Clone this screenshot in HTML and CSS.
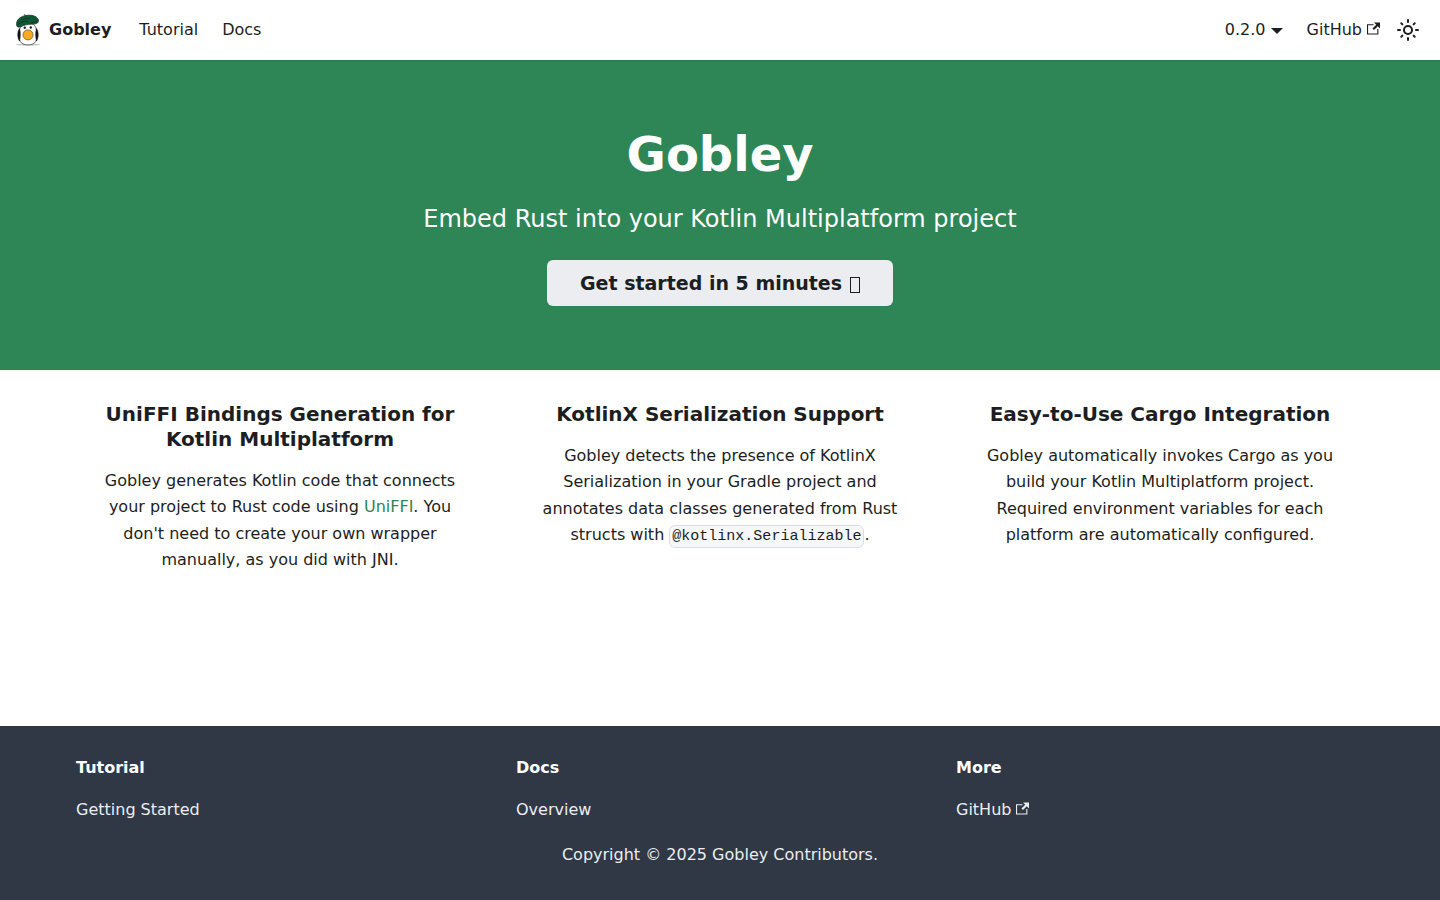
FILE: index.html
```html
<!DOCTYPE html>
<html lang="en">
<head>
<meta charset="utf-8">
<meta name="viewport" content="width=device-width, initial-scale=1">
<title>Gobley</title>
<link rel="stylesheet" href="styles.css">
</head>
<body>
<svg class="sprite" aria-hidden="true">
  <symbol id="external" viewBox="0 0 24 24">
    <path fill="currentColor" d="M21 13v10h-21v-19h12v2h-10v15h17v-8h2zm3-12h-10.988l4.035 4-6.977 7.07 2.828 2.828 6.977-7.07 4.125 4.172v-11z"/>
  </symbol>
</svg>
<nav class="navbar" aria-label="Main">
  <div class="navbar-items">
    <a class="brand" href="#">
      <svg class="logo" viewBox="0 0 24 32" aria-hidden="true">
        <ellipse cx="12" cy="30.6" rx="12" ry="1" fill="#c4c4c4"/>
        <path d="M12 9C6 9 4 12 3.200 18C2.400 26 4 30.900 12 30.900S21.600 26 20.800 18C20 12 18 9 12 9Z" fill="#fff" stroke="#444" stroke-width=".8"/>
        <path d="M3.400 14.500C1.400 18 1.200 23 3.400 27C4.600 23 4.600 18 3.400 14.500ZM20.600 14.500C22.600 18 22.800 23 20.600 27C19.400 23 19.400 18 20.600 14.500Z" fill="#111" stroke="#111" stroke-width=".6"/>
        <circle cx="8.700" cy="13.700" r="1.200" fill="#222"/>
        <circle cx="14.800" cy="13.500" r="1.200" fill="#222"/>
        <circle cx="12" cy="20.900" r="5" fill="#fca91d" stroke="#7c6a48" stroke-width=".9"/>
        <path d="M.7 11.500C-.2 6 4 2.200 11 1.400C17 .6 22.200 3 22.500 6.500C22.700 9 20.500 10 16.500 10.100C11 10.300 8 11.200 5 12.500C2.500 13.600 1.100 13.200 .7 11.500Z" fill="#0c5935" stroke="#1c2b24" stroke-width=".8"/>
        <path d="M9.400 2.200L8.600.2M2.200 10.500C5 7.500 9 7 12 7.500M15 8.500C18 8.500 20 8 21 6.500M6 6C9 4 12 4 14 4.500" fill="none" stroke="#16301f" stroke-width=".9"/>
      </svg>
      <b>Gobley</b>
    </a>
    <a class="nav-link" href="#">Tutorial</a>
    <a class="nav-link" href="#">Docs</a>
  </div>
  <div class="navbar-items">
    <button class="nav-link version" type="button" aria-haspopup="true">0.2.0</button>
    <a class="nav-link" href="#">GitHub<svg class="external" aria-hidden="true"><use href="#external"/></svg></a>
    <button class="theme-toggle" type="button" aria-label="Switch between dark and light mode">
      <svg viewBox="0 0 24 24" width="24" height="24" aria-hidden="true">
        <g fill="none" stroke="currentColor" stroke-width="2" stroke-linecap="round">
          <circle cx="12" cy="12" r="4"/>
          <path d="M2 12h2M20 12h2M12 2v2M12 20v2M5.300 5.300l1.050 1.050M17.650 17.650l1.050 1.050M5.300 18.700l1.050-1.050M17.650 6.350l1.050-1.050"/>
        </g>
      </svg>
    </button>
  </div>
</nav>
<header class="hero">
  <h1>Gobley</h1>
  <p>Embed Rust into your Kotlin Multiplatform project</p>
  <a class="cta" href="#">Get started in 5 minutes<span class="glyph-box" aria-hidden="true"></span></a>
</header>
<main>
  <section class="features container">
    <div class="feature">
      <h3>UniFFI Bindings Generation for Kotlin Multiplatform</h3>
      <p>Gobley generates Kotlin code that connects your project to Rust code using <a href="#">UniFFI</a>. You don't need to create your own wrapper manually, as you did with JNI.</p>
    </div>
    <div class="feature">
      <h3>KotlinX Serialization Support</h3>
      <p>Gobley detects the presence of KotlinX Serialization in your Gradle project and annotates data classes generated from Rust structs with <code>@kotlinx.Serializable</code>.</p>
    </div>
    <div class="feature">
      <h3>Easy-to-Use Cargo Integration</h3>
      <p>Gobley automatically invokes Cargo as you build your Kotlin Multiplatform project. Required environment variables for each platform are automatically configured.</p>
    </div>
  </section>
</main>
<footer class="footer">
  <div class="footer-links container">
    <div class="footer-col"><div class="footer-title">Tutorial</div><a href="#">Getting Started</a></div>
    <div class="footer-col"><div class="footer-title">Docs</div><a href="#">Overview</a></div>
    <div class="footer-col"><div class="footer-title">More</div><a href="#">GitHub<svg class="external" aria-hidden="true"><use href="#external"/></svg></a></div>
  </div>
  <div class="copyright">Copyright © 2025 Gobley Contributors.</div>
</footer>
</body>
</html>
```
FILE: styles.css
```css
* { box-sizing: border-box; }
body {
  margin: 0;
  min-height: 100vh;
  display: flex;
  flex-direction: column;
  background: #fff;
  color: #1c1e21;
  font: 16px/1.65 "DejaVu Sans", sans-serif;
}
h1, h3, p { margin: 0; }
a { color: #2e8555; text-decoration: none; }
button { border: 0; background: none; font: inherit; color: inherit; cursor: pointer; }
main { flex: 1; }
.sprite { position: absolute; width: 0; height: 0; }
.container { width: 100%; max-width: 1320px; margin: 0 auto; }

.navbar {
  position: sticky;
  top: 0;
  z-index: 1;
  display: flex;
  justify-content: space-between;
  height: 60px;
  padding: 8px 16px;
  background: #fff;
  box-shadow: 0 1px 2px 0 rgba(0, 0, 0, .1);
}
.navbar-items { display: flex; align-items: center; }
.brand { display: flex; align-items: center; gap: 9px; margin-right: 16px; color: inherit; }
.logo { width: 24px; height: 32px; }
.nav-link { padding: 4px 12px; color: inherit; }
.version::after {
  content: "";
  display: inline-block;
  margin-left: 5px;
  border: 6px solid transparent;
  border-top-color: currentColor;
  border-bottom: 0;
  vertical-align: 1px;
}
.external { width: 13px; height: 13px; margin-left: 5px; }
.theme-toggle { display: grid; place-items: center; width: 32px; height: 32px; padding: 0; }

.hero { padding: 64px 16px; background: #2e8555; color: #fff; text-align: center; }
.hero h1 { margin-bottom: 16px; font-size: 48px; line-height: 60px; }
.hero p { margin-bottom: 22px; font-size: 24px; line-height: 38px; }
.cta {
  display: flex;
  align-items: center;
  gap: 8px;
  width: fit-content;
  margin: 0 auto;
  padding: 8px 33px;
  border-radius: 6px;
  background: #ebedf0;
  color: #1c1e21;
  font-size: 19px;
  font-weight: 700;
  line-height: 30px;
}
.glyph-box { width: 10px; height: 16px; margin-top: 3px; border: 1px solid currentColor; }

.features { display: flex; padding: 32px 0; }
.feature { flex: 1; padding: 0 32px; text-align: center; }
.feature h3 { margin-bottom: 16px; font-size: 20px; line-height: 25px; }
code {
  padding: 2px;
  border: 1px solid rgba(0, 0, 0, .1);
  border-radius: 6px;
  background: #f6f7f8;
  font-family: "Liberation Mono", monospace;
  font-size: 15px;
}

.footer { padding: 32px 0; background: #303846; color: #ebedf0; }
.footer a { color: inherit; line-height: 32px; }
.footer-links { display: flex; margin-bottom: 16px; }
.footer-col { flex: 1; padding: 0 16px; }
.footer-title { margin-bottom: 16px; color: #fff; font-weight: 700; line-height: 20px; }
.copyright { text-align: center; }
```
